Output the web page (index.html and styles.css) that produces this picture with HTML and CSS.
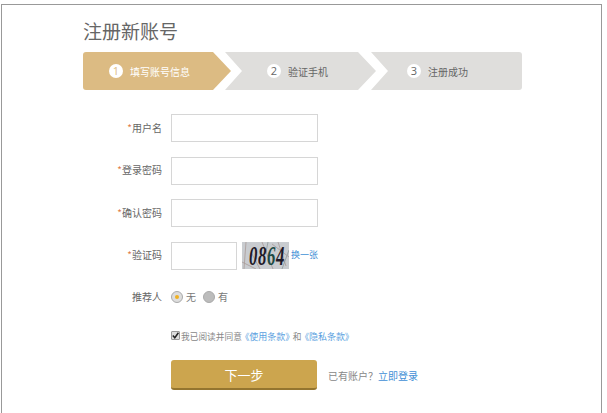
FILE: index.html
```html
<!DOCTYPE html>
<html lang="zh">
<head>
<meta charset="utf-8">
<title>注册新账号</title>
<link rel="stylesheet" href="styles.css">
</head>
<body>
<main class="frame">
  <h1 class="title">注册新账号</h1>
  <ol class="steps">
    <li class="step step-first step-active"><span class="num">1</span><span>填写账号信息</span></li>
    <li class="step step-mid"><span class="num">2</span><span>验证手机</span></li>
    <li class="step step-last"><span class="num">3</span><span>注册成功</span></li>
  </ol>
  <form class="form">
    <div class="row">
      <label class="label"><i class="req">*</i>用户名</label>
      <span class="input"></span>
    </div>
    <div class="row">
      <label class="label"><i class="req">*</i>登录密码</label>
      <span class="input"></span>
    </div>
    <div class="row">
      <label class="label"><i class="req">*</i>确认密码</label>
      <span class="input"></span>
    </div>
    <div class="row row-captcha">
      <label class="label"><i class="req">*</i>验证码</label>
      <span class="input input-short"></span>
      <div class="captcha">
        <svg class="captcha-noise" viewBox="0 0 47 27" width="47" height="27">
          <rect width="47" height="27" fill="#c9ccd0"/>
          <path d="M0 20L14 27M4 0L2 27M20 0L31 27M36 0L44 24M30 2L47 15M10 12L18 27" stroke="#a99a98" stroke-width=".8" fill="none"/>
          <path d="M40 27L47 8M26 0L24 10" stroke="#8f9a9c" stroke-width=".8" fill="none"/>
        </svg>
        <span class="digit">0</span><span class="digit">8</span><span class="digit digit-teal">6</span><span class="digit">4</span>
      </div>
      <a class="link swap">换一张</a>
    </div>
    <div class="row row-radio">
      <span class="label">推荐人</span>
      <span class="radio radio-on"></span><span class="radio-text">无</span>
      <span class="radio radio-second"></span><span class="radio-text">有</span>
    </div>
    <div class="agree">
      <span class="check"><svg viewBox="0 0 9 9" width="9" height="9"><path d="M1.8 4.6L3.8 6.8L7.4 1.8" stroke="#222" stroke-width="1.5" fill="none"/></svg></span>
      <span>我已阅读并同意</span>
      <a class="link terms">《使用条款》</a>
      <span class="and">和</span>
      <a class="link terms">《隐私条款》</a>
    </div>
    <div class="submit-row">
      <button class="next" type="button">下一步</button>
      <span class="login">已有账户？<a class="link">立即登录</a></span>
    </div>
  </form>
</main>
</body>
</html>
```
FILE: styles.css
```css
* { box-sizing: border-box; }
html, body { margin: 0; padding: 0; background: #fff; overflow: hidden; }
body { height: 413px; padding: 4px 5px 0 1px; font-family: "Noto Sans CJK SC", "Liberation Sans", sans-serif; color: #666; }
.frame { height: 409px; border: 1px solid #999; border-bottom: 0; padding: 14px 0 0 81px; }
.title { margin: 0; font-size: 19px; line-height: 24px; font-weight: 400; color: #666; }
.steps { display: flex; margin: 9px 0 0; padding: 0; list-style: none; height: 38px; }
.step { display: flex; align-items: center; height: 38px; background: #dfdedc; font-size: 10px; color: #666; }
.step-first { width: 148px; padding-left: 26px; border-radius: 3px 0 0 3px; clip-path: polygon(0 0, 130px 0, 148px 19px, 130px 38px, 0 38px); }
.step-mid { width: 151px; margin-left: -6px; padding-left: 42px; clip-path: polygon(0 0, 133px 0, 151px 19px, 133px 38px, 0 38px, 17px 19px); }
.step-last { width: 151px; margin-left: -5px; padding-left: 36px; border-radius: 0 3px 3px 0; clip-path: polygon(0 0, 151px 0, 151px 38px, 0 38px, 17px 19px); }
.step-active { background: #dcbb83; color: #fff; }
.num { flex: none; width: 14px; height: 14px; margin-right: 7px; border-radius: 50%; background: #fff; color: #666; font-size: 11px; line-height: 14px; text-align: center; font-family: "Open Sans", sans-serif; }
.step-active .num { color: #dcbb83; }
.form { margin-top: 24px; }
.row { display: flex; align-items: center; height: 28px; margin-bottom: 14.5px; font-size: 10px; }
.label { flex: none; width: 79px; margin: 0 9px 2px 0; text-align: right; font-size: 10px; color: #666; }
.req { font-style: normal; color: #e07b4c; }
.input { display: block; width: 147px; height: 28px; border: 1px solid #d6d6d6; background: #fff; }
.input-short { width: 66px; }
.captcha { position: relative; display: flex; flex: none; width: 47px; height: 27px; margin-left: 5px; padding-left: 7px; }
.captcha-noise { position: absolute; left: 0; top: 0; }
.digit { position: relative; display: block; width: 9px; height: 27px; transform: scaleX(.6); transform-origin: left center; font: italic 700 28px/27px "Liberation Serif", serif; color: #1f1a28; }
.digit-teal { color: #1d4a44; }
.swap { margin: 0 0 2px 2px; font-size: 9px; }
.link { color: #3f8fd6; }
.row-captcha { margin-bottom: 13.5px; }
.row-radio { margin-bottom: 18px; }
.radio { flex: none; width: 12px; height: 12px; border-radius: 50%; background: #bcbcbc; border: 1px solid #aaa; }
.radio-on { position: relative; background: #ddd; }
.radio-on::after { content: ""; position: absolute; left: 3px; top: 3px; width: 4px; height: 4px; border-radius: 50%; background: #f0b020; }
.radio-text { margin: 0 0 1px 3px; width: 10px; color: #777; }
.radio-second { margin-left: 7px; }
.agree { display: flex; align-items: center; height: 14px; margin-left: 88px; font-size: 8.7px; color: #888; }
.check { width: 9px; height: 9px; margin: -2px 1px 0 0; border: 1px solid #999; border-radius: 1px; background: #ddd; display: flex; align-items: center; justify-content: center; flex: none; }
.check svg { flex: none; }
.terms { margin-left: 3px; font-size: 9px; font-feature-settings: "palt"; color: #5a9fe0; }
.and { margin-left: 3px; }
.submit-row { display: flex; align-items: center; margin: 17px 0 0 88px; }
.next { width: 146px; height: 30px; padding: 0; border: 0; border-bottom: 2px solid #94752f; border-radius: 3px; background: #cca54e; color: #fff; font: 400 13px "Noto Sans CJK SC", sans-serif; }
.login { margin-left: 11px; font-size: 10px; color: #888; }
```
